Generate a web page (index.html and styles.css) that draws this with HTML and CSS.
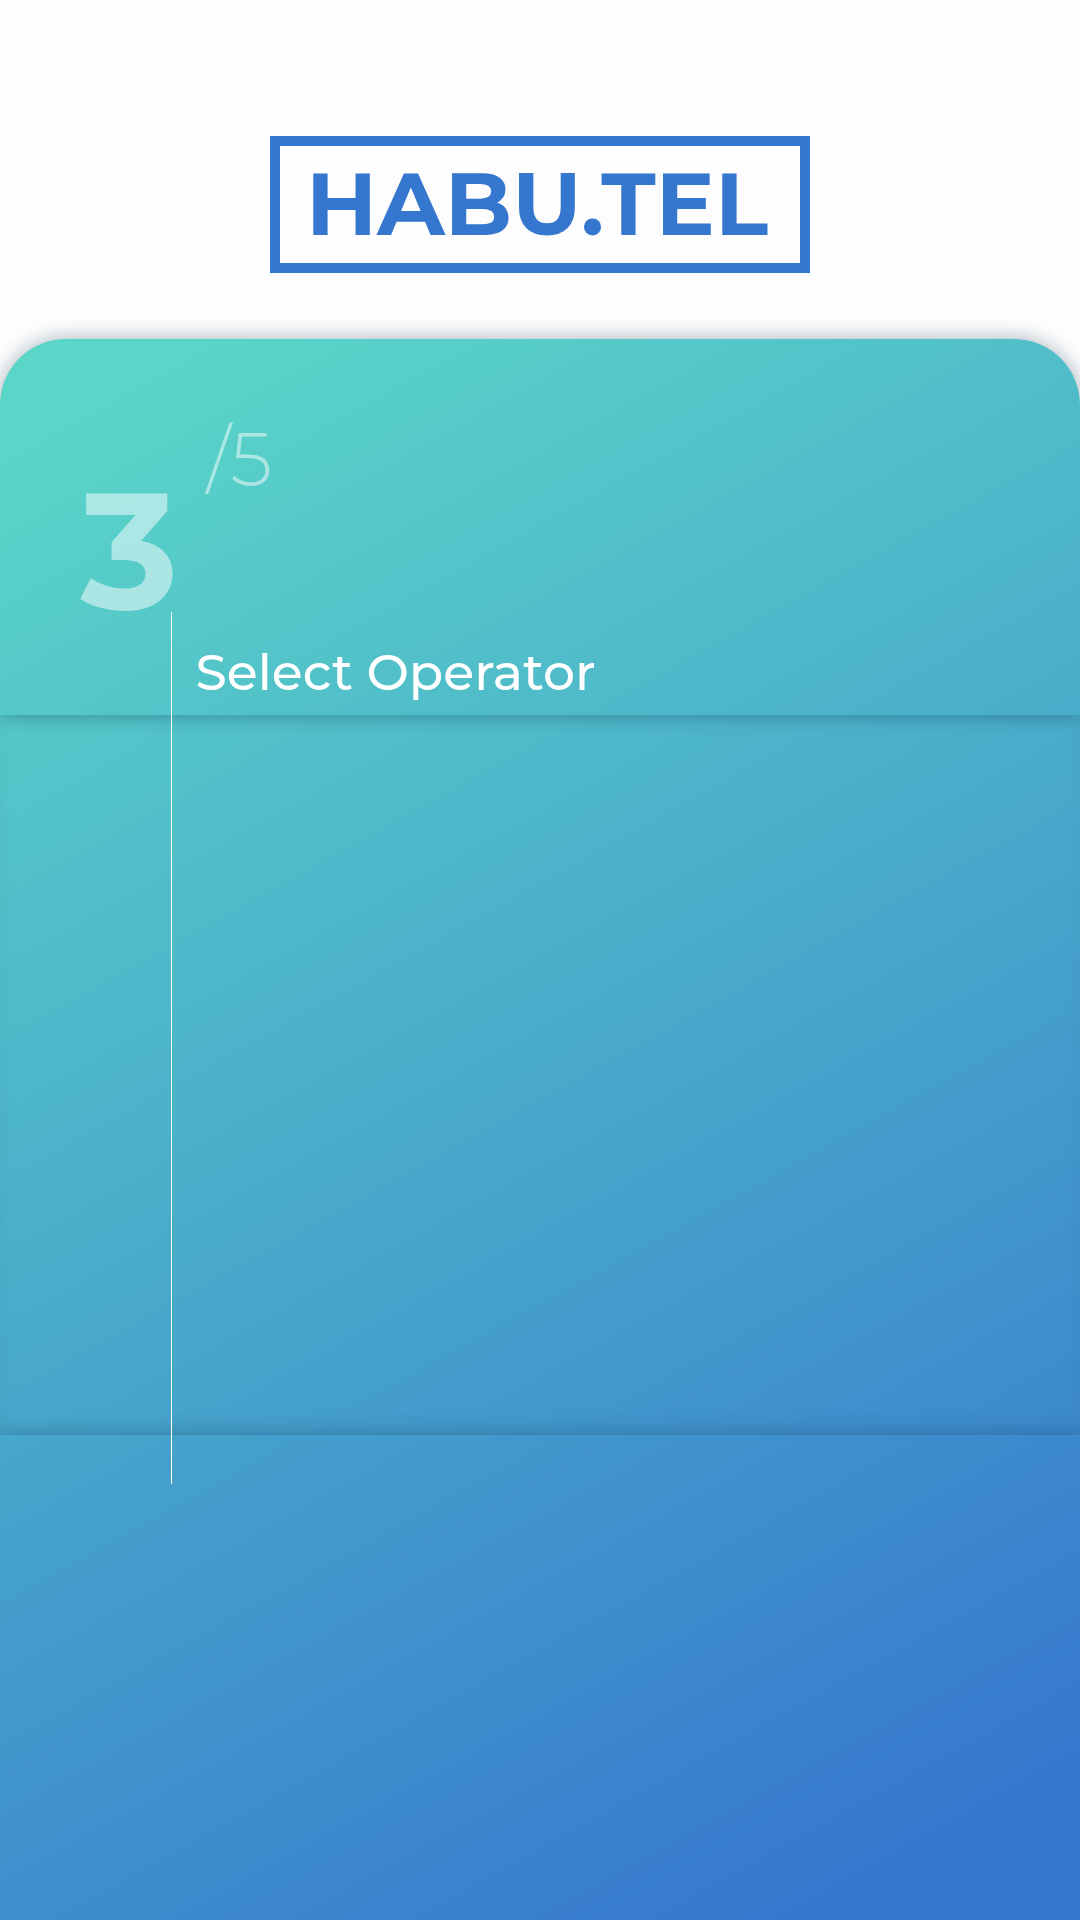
FILE: index.html
```html
<!DOCTYPE html>
<html lang="en">
<head>
<meta charset="utf-8">
<title>HABU.TEL</title>
<link rel="stylesheet" href="styles.css">
</head>
<body>
<header class="header">
  <div class="logo">
    <svg class="logo-text" viewBox="0 0 520 117"><text x="26" y="89">HABU.TEL</text></svg>
  </div>
</header>
<main class="card">
  <section class="intro">
    <svg class="step" viewBox="0 0 340 376">
      <text class="current" x="80.5" y="270">3</text>
      <text class="total" x="206.5" y="147">/5</text>
    </svg>
    <svg class="title" viewBox="0 0 440 85"><text x="15.5" y="60">Select Operator</text></svg>
  </section>
  <section class="operators"></section>
  <footer class="footer"></footer>
  <div class="line"></div>
</main>
</body>
</html>
```
FILE: styles.css
```css
* { box-sizing: border-box; }
body {
  margin: 0;
  width: 1080px;
  height: 1920px;
  display: flex;
  flex-direction: column;
  overflow: hidden;
  background: #fdfdfd;
  font-family: Montserrat, Lato, sans-serif;
}
.header {
  height: 339px;
  padding-top: 136px;
  display: flex;
  justify-content: center;
  align-items: flex-start;
}
.logo {
  width: 540px;
  height: 137px;
  border: 10px solid #3576cf;
}
.logo-text { display: block; width: 520px; height: 117px; }
.logo-text text { font-size: 88px; font-weight: 700; letter-spacing: .12px; fill: #3576cf; }
.card {
  position: relative;
  flex: 1;
  border-radius: 66px 66px 0 0;
  background: linear-gradient(151deg, #5ad6c8 4%, #48a8cb 49%, #3575ce 95%);
}
.intro {
  height: 376px;
  display: grid;
  border-radius: 66px 66px 0 0;
  box-shadow: 0 0 20px rgba(25, 60, 85, .4);
}
.step, .title { grid-area: 1 / 1; display: block; }
.step { width: 340px; height: 376px; fill: rgba(255, 255, 255, .5); }
.current { font-size: 165.5px; font-weight: 700; }
.total { font-size: 75px; font-weight: 300; }
.title {
  width: 440px;
  height: 85px;
  margin: 291px 0 0 180px;
  fill: #fff;
  font-size: 50.5px;
  font-weight: 500;
}
.operators {
  height: 720px;
  box-shadow: inset 0 0 14px rgba(35, 60, 80, .06);
}
.footer {
  height: 485px;
  box-shadow: 0 0 20px rgba(25, 60, 85, .35);
}
.line {
  position: absolute;
  left: 171px;
  top: 273px;
  width: 1px;
  height: 872px;
  background: #fff;
}
```
